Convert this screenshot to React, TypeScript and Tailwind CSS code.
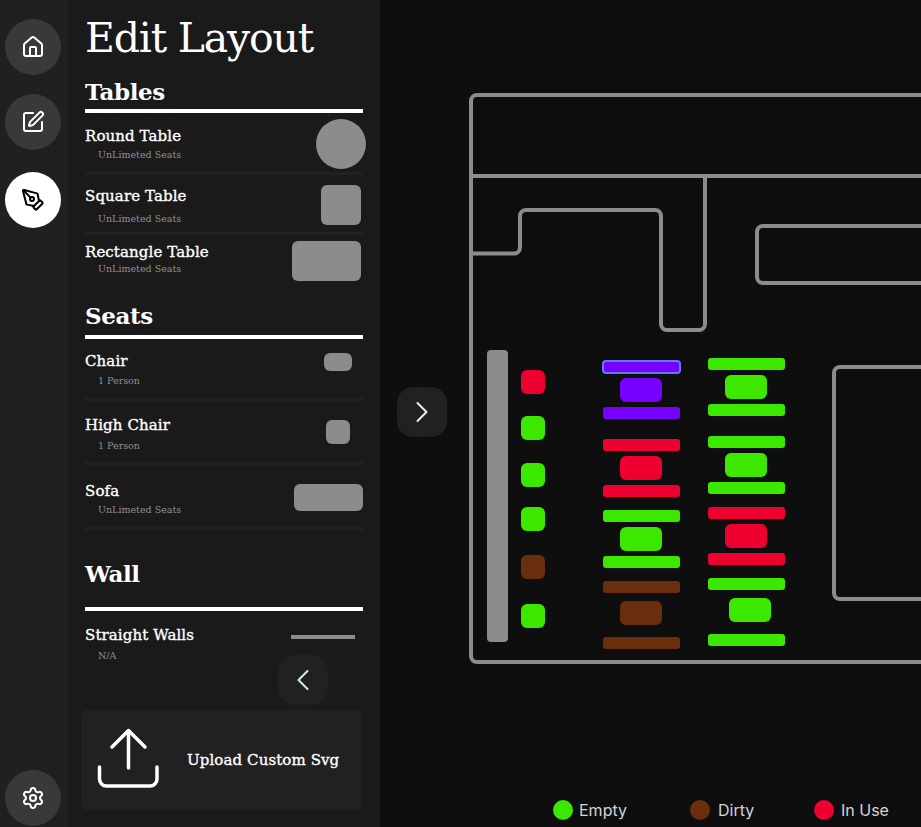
import React from 'react';
import { ChevronLeft, ChevronRight, House, PenTool, Settings, SquarePen } from 'lucide-react';

const GREEN = 'bg-[#3de800]';
const RED = 'bg-[#ee0030]';
const BROWN = 'bg-[#6b2e0c]';
const PURPLE = 'bg-[#7700ff]';

// Items on the floor plan, coordinates relative to the canvas (page x - 380)
const chairs = [
    { top: 370, color: RED },
    { top: 416, color: GREEN },
    { top: 463, color: GREEN },
    { top: 507, color: GREEN },
    { top: 555, color: BROWN },
    { top: 604, color: GREEN },
];

const sets = [
    { x: 223, tx: 240, a: 361, b: 378, c: 407, color: PURPLE, selected: true },
    { x: 223, tx: 240, a: 439, b: 456, c: 485, color: RED },
    { x: 223, tx: 240, a: 510, b: 527, c: 556, color: GREEN },
    { x: 223, tx: 240, a: 581, b: 601, c: 637, color: BROWN },
    { x: 328, tx: 345, a: 358, b: 375, c: 404, color: GREEN },
    { x: 328, tx: 345, a: 436, b: 453, c: 482, color: GREEN },
    { x: 328, tx: 345, a: 507, b: 524, c: 553, color: RED },
    { x: 328, tx: 349, a: 578, b: 598, c: 634, color: GREEN },
];

const NavButton = ({ children, active }: { children: React.ReactNode; active?: boolean }) => (
    <div className={`w-14 h-14 rounded-full flex items-center justify-center ${active ? 'bg-white text-black' : 'bg-[#3a3939] text-white'}`}>
        {children}
    </div>
);

const Heading = ({ children, className }: { children: React.ReactNode; className: string }) => (
    <div className={className}>
        <h2 className="text-[23px] leading-[32px] font-bold text-white tracking-[-0.4px] [font-family:'DejaVu_Serif',serif]">{children}</h2>
    </div>
);

const Rule = () => <div className="h-1 w-[278px] bg-white" />;
const Divider = () => <div className="h-[3px] w-[278px] bg-[#212121]" />;

const Item = ({ name, sub, rowClass, subClass, children }: { name: string; sub: string; rowClass: string; subClass: string; children: React.ReactNode }) => (
    <div className={`flex justify-between w-[278px] ${rowClass}`}>
        <div className="flex flex-col">
            <span className="text-[15px] leading-5 text-white whitespace-nowrap tracking-[0.1px] [font-family:'DejaVu_Serif',serif] [-webkit-text-stroke:0.35px_white]">{name}</span>
            <span className={`text-[9.5px] leading-3 ml-[13px] text-[#909090] whitespace-nowrap [font-family:'DejaVu_Serif',serif] ${subClass}`}>{sub}</span>
        </div>
        {children}
    </div>
);

export default function App() {
    return (
        <div className="flex w-[921px] h-[827px] overflow-hidden bg-[#0e0e0e]">
            {/* icon rail */}
            <div className="w-[68px] h-full bg-[#202020] flex flex-col items-start pl-[5px] pt-[19px] pb-px">
                <NavButton><House size={24} strokeWidth={2} /></NavButton>
                <div className="mt-[19px]"><NavButton><SquarePen size={24} strokeWidth={2} /></NavButton></div>
                <div className="mt-[22px]"><NavButton active><PenTool size={24} strokeWidth={2} /></NavButton></div>
                <div className="mt-auto"><NavButton><Settings size={24} strokeWidth={2} /></NavButton></div>
            </div>

            {/* item panel */}
            <div className="relative w-[312px] h-full bg-[#1a1a1a] pl-[17px]">
                <h1 className="h-[75px] pt-[12px] text-[41px] leading-[52px] tracking-[-1.2px] text-white whitespace-nowrap [font-family:'DejaVu_Serif',serif]">Edit Layout</h1>
                <Heading className="h-[34px] pt-px">Tables</Heading>
                <Rule />
                <Item name="Round Table" sub="UnLimeted Seats" rowClass="h-[59px] pt-[13px]" subClass="mt-[3px]">
                    <div className="w-[50px] h-[50px] rounded-full bg-[#8c8c8c] -mr-[3px] -mt-[7px]" />
                </Item>
                <Divider />
                <Item name="Square Table" sub="UnLimeted Seats" rowClass="h-[57px] pt-[11px]" subClass="mt-[7px]">
                    <div className="w-10 h-10 rounded-md bg-[#8c8c8c] mr-0.5 -mt-[1px]" />
                </Item>
                <Divider />
                <Item name="Rectangle Table" sub="UnLimeted Seats" rowClass="h-[46px] pt-[7px]" subClass="mt-px">
                    <div className="w-[69px] h-10 rounded-md bg-[#8c8c8c] mr-0.5 -mt-[1px]" />
                </Item>
                <Heading className="h-[54px] pt-[19px]">Seats</Heading>
                <Rule />
                <Item name="Chair" sub="1 Person" rowClass="h-[59px] pt-[12px]" subClass="mt-[4px]">
                    <div className="w-7 h-[18px] rounded-md bg-[#8c8c8c] mr-[11px] mt-[2px]" />
                </Item>
                <Divider />
                <Item name="High Chair" sub="1 Person" rowClass="h-[61px] pt-[14px]" subClass="mt-[5px]">
                    <div className="w-6 h-6 rounded-md bg-[#8c8c8c] mr-[13px] mt-[5px]" />
                </Item>
                <Divider />
                <Item name="Sofa" sub="UnLimeted Seats" rowClass="h-[62px] pt-[16px]" subClass="mt-[3px]">
                    <div className="w-[69px] h-[27px] rounded-md bg-[#8c8c8c] mt-[3px]" />
                </Item>
                <Divider />
                <Heading className="h-[77px] pt-[28px]">Wall</Heading>
                <Rule />
                <Item name="Straight Walls" sub="N/A" rowClass="h-[60px] pt-[14px]" subClass="mt-[5px]">
                    <div className="w-16 h-1 bg-[#8c8c8c] mr-2 mt-[10px]" />
                </Item>

                <div className="absolute left-[210px] top-[655px] w-[50px] h-[50px] rounded-2xl bg-[#212121] flex items-center justify-center text-[#d5efe9]">
                    <ChevronLeft size={36} strokeWidth={1.3} />
                </div>

                <div className="absolute left-[13px] top-[710px] w-[280px] h-[100px] rounded-md bg-[#212121] flex items-center">
                    <svg width="62" height="62" viewBox="0 0 62 62" fill="none" stroke="white" strokeWidth="3.5" strokeLinecap="round" strokeLinejoin="round" className="ml-[16px] -mt-[5px]">
                        <path d="M15 20 L31.5 3.5 L48 20" />
                        <path d="M31.5 4 V41" />
                        <path d="M2.5 40 V52 a7 7 0 0 0 7 7 H53 a7 7 0 0 0 7 -7 V40" />
                    </svg>
                    <span className="ml-[28px] text-[15px] tracking-[0.1px] text-white whitespace-nowrap [font-family:'DejaVu_Serif',serif] [-webkit-text-stroke:0.35px_white]">Upload Custom Svg</span>
                </div>
            </div>

            {/* floor plan */}
            <div className="relative flex-1 h-full flex flex-col overflow-hidden">
                <div className="relative flex-1">
                    <svg width="541" height="790" viewBox="380 0 541 790" fill="none" stroke="#8c8c8c" strokeWidth="4" className="absolute left-0 top-0">
                        <path d="M930 95 H477 a6 6 0 0 0 -6 6 V656 a6 6 0 0 0 6 6 H930" />
                        <path d="M471 176 H930" />
                        <path d="M471 253.5 H514 a6 6 0 0 0 6 -6 V216 a6 6 0 0 1 6 -6 H655 a6 6 0 0 1 6 6 V324 a6 6 0 0 0 6 6 H699 a6 6 0 0 0 6 -6 V176" />
                        <path d="M930 226 H763 a6 6 0 0 0 -6 6 V277 a6 6 0 0 0 6 6 H930" />
                        <path d="M930 367 H840 a6 6 0 0 0 -6 6 V593 a6 6 0 0 0 6 6 H930" />
                    </svg>

                    <div className="absolute left-[107px] top-[350px] w-[21px] h-[292px] rounded-sm bg-[#8c8c8c]" />

                    {chairs.map(c => (
                        <div key={c.top} className={`absolute left-[141px] w-6 h-6 rounded-md ${c.color}`} style={{ top: c.top }} />
                    ))}

                    {sets.map(s => (
                        <React.Fragment key={`${s.x}-${s.a}`}>
                            <div
                                className={`absolute w-[77px] h-3 rounded-[3px] ${s.color} ${s.selected ? 'outline-2 -outline-offset-1 outline-[#5c7cf0]' : ''}`}
                                style={{ left: s.x, top: s.a }}
                            />
                            <div className={`absolute w-[42px] h-6 rounded-md ${s.color}`} style={{ left: s.tx, top: s.b }} />
                            <div className={`absolute w-[77px] h-3 rounded-[3px] ${s.color}`} style={{ left: s.x, top: s.c }} />
                        </React.Fragment>
                    ))}

                    <div className="absolute left-[17px] top-[387px] w-[50px] h-[50px] rounded-2xl bg-[#212121] flex items-center justify-center text-[#e8f3f0]">
                        <ChevronRight size={36} strokeWidth={1.3} />
                    </div>
                </div>

                <div className="h-[37px] shrink-0 flex items-start pl-[173px] pt-[10px] text-[16px] leading-5 text-[#d4d4d4] [font-family:Inter,sans-serif]">
                    <span className="w-5 h-5 rounded-full bg-[#3de800]" />
                    <span className="ml-1.5 w-[111px]">Empty</span>
                    <span className="w-5 h-5 rounded-full bg-[#6b2e0c]" />
                    <span className="ml-2 w-[96px]">Dirty</span>
                    <span className="w-5 h-5 rounded-full bg-[#ee0030]" />
                    <span className="ml-[7px] whitespace-nowrap">In Use</span>
                </div>
            </div>
        </div>
    );
}
